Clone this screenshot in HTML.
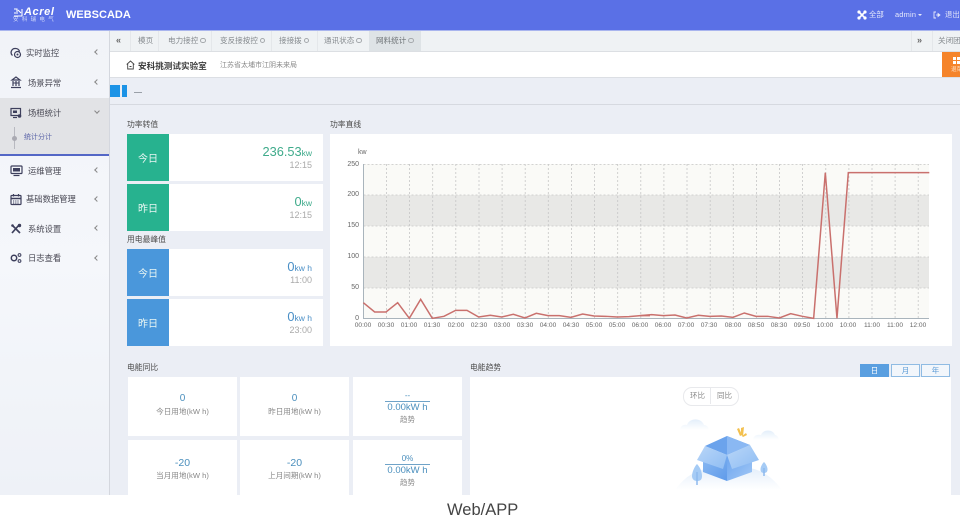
<!DOCTYPE html>
<html lang="zh">
<head>
<meta charset="utf-8">
<title>WEBSCADA</title>
<style>
html,body{margin:0;padding:0;background:#fff}
#root{position:relative;width:960px;height:522px;overflow:hidden;background:#fff;font-family:"Liberation Sans","Noto Sans CJK SC",sans-serif;color:#555;filter:blur(.35px)}
.a{position:absolute;white-space:nowrap}
.b{position:absolute}
.menu{font-size:8.3px;color:#4a4a55;line-height:12px}
.arr{position:absolute;left:95px;width:3px;height:3px;border-left:1px solid #888;border-bottom:1px solid #888;transform:rotate(45deg)}
.tab{font-size:7.6px;color:#858a8e;line-height:10px;top:36px}
.dot{display:inline-block;width:3.500px;height:3.500px;border:.6px solid #a5a9ad;border-radius:50%;margin-left:2px;vertical-align:0}
.lbl{font-size:7.8px;color:#4c4c4c;line-height:10px}
.card{position:absolute;left:127px;width:196px;background:#fff}
.side{position:absolute;left:0;top:0;bottom:0;width:42px;color:#e9f6f3;font-size:10px;display:flex;align-items:center;justify-content:center}
.val{position:absolute;right:11px;top:10px;font-size:12.800px;line-height:16px}
.val small{font-size:8.500px}
.tm{position:absolute;right:11px;top:26px;font-size:9px;line-height:11px;color:#aaa}
.cell{position:absolute;background:#fff;width:109px;text-align:center}
.num{font-size:10px;color:#4b8fbd;line-height:12px}
.sub{font-size:7.600px;color:#888;line-height:10px}
.yl{position:absolute;right:601px;font-size:7px;color:#666;line-height:8px}
.xl{position:absolute;top:322px;width:24px;margin-left:-12px;text-align:center;font-size:6.600px;line-height:8px;color:#666}
.btn{position:absolute;top:364px;width:27px;height:11px;font-size:7.500px;line-height:11px;text-align:center;border:1px solid #8fbbe3;color:#5a9ad6;background:#f2f6fb;box-sizing:content-box}
</style>
</head>
<body>
<div id="root">
  <!-- page background -->
  <div class="b" style="left:110px;top:31px;width:850px;height:464px;background:#ebeef5"></div>

  <!-- header -->
  <div class="b" style="left:0;top:0;width:960px;height:30px;background:#5a70e6"></div>
  <div class="b" style="left:0;top:30px;width:960px;height:1px;background:#a9b5ee"></div>
  <div class="a" style="left:24px;top:6px;font-size:11px;font-weight:bold;font-style:italic;color:#fff;line-height:12px;letter-spacing:.6px">Acrel</div>
  <svg class="b" style="left:13px;top:8px" width="10" height="9" viewBox="0 0 10 9"><path d="M1 1h3v3M1 8h8M9 1v7M5 2l3 3M1 5h4" fill="none" stroke="#fff" stroke-width="1.100"/></svg>
  <div class="a" style="left:13px;top:17px;font-size:5.500px;line-height:7px;color:#d8def9;letter-spacing:3.300px">安科瑞电气</div>
  <div class="a" style="left:66px;top:8px;font-size:11px;font-weight:bold;color:#fff;line-height:14px">WEBSCADA</div>
  <svg class="b" style="left:857px;top:10px" width="10" height="10" viewBox="0 0 10 10"><path d="M2 2l6 6M8 2L2 8" stroke="#fff" stroke-width="1.600"/><circle cx="2" cy="2" r="1.600" fill="#fff"/><circle cx="8" cy="2" r="1.600" fill="#fff"/><circle cx="2" cy="8" r="1.600" fill="#fff"/><circle cx="8" cy="8" r="1.600" fill="#fff"/></svg>
  <div class="a" style="left:869px;top:10px;font-size:7.400px;line-height:10px;color:#e6e9fb">全部</div>
  <div class="a" style="left:895px;top:10px;font-size:7.400px;line-height:10px;color:#e6e9fb;letter-spacing:.2px">admin</div>
  <div class="b" style="left:918px;top:14px;border-left:2px solid transparent;border-right:2px solid transparent;border-top:2px solid #e6e9fb"></div>
  <svg class="b" style="left:933px;top:11px" width="8" height="8" viewBox="0 0 8 8"><path d="M3 1H1v6h2" fill="none" stroke="#e6e9fb" stroke-width=".9"/><path d="M3 4h3M5 2.400L7 4 5 5.600z" fill="#e6e9fb" stroke="#e6e9fb" stroke-width=".8"/></svg>
  <div class="a" style="left:945px;top:10px;font-size:7.400px;line-height:10px;color:#e6e9fb">退出</div>

  <!-- sidebar -->
  <div class="b" style="left:0;top:31px;width:109px;height:464px;background:linear-gradient(180deg,#f1f3f8,#f5f7fb 50%,#eef1f7)"></div>
  <div class="b" style="left:109px;top:31px;width:1px;height:464px;background:#d4d7de"></div>
  <div class="b" style="left:0;top:98px;width:109px;height:56px;background:#e2e3e6"></div>
  <div class="b" style="left:0;top:154px;width:109px;height:2px;background:#5467c6"></div>
  <div class="b" style="left:14px;top:127px;width:1px;height:22px;background:#b8b9c0"></div>
  <div class="b" style="left:12px;top:136px;width:5px;height:5px;border-radius:50%;background:#aaaab2"></div>

  <svg class="b" style="left:10px;top:47px" width="12" height="12" viewBox="0 0 12 12"><path d="M5.500 1.500a4 4 0 0 0-3 7" fill="none" stroke="#3d3f5c" stroke-width="1.300"/><path d="M5.500 1.500a4 4 0 0 1 4 3" fill="none" stroke="#3d3f5c" stroke-width="1.300"/><circle cx="7.500" cy="7.500" r="3" fill="none" stroke="#3d3f5c" stroke-width="1.200"/><circle cx="7.500" cy="7.500" r="1" fill="#3d3f5c"/></svg>
  <div class="a menu" style="left:26px;top:47px">实时监控</div>
  <div class="arr" style="top:50px"></div>

  <svg class="b" style="left:10px;top:76px" width="12" height="13" viewBox="0 0 12 13"><path d="M6 1L2 4h8zM3 5v5M6 5v5M9 5v5M1 11.500h10" fill="none" stroke="#3d3f5c" stroke-width="1.200"/><path d="M3 7h6" stroke="#3d3f5c"/></svg>
  <div class="a menu" style="left:28px;top:77px">场景异常</div>
  <div class="arr" style="top:80px"></div>

  <svg class="b" style="left:10px;top:107px" width="12" height="12" viewBox="0 0 12 12"><rect x="1" y="1.500" width="9.500" height="7" fill="none" stroke="#3d3f5c" stroke-width="1.200"/><rect x="3" y="3.500" width="4" height="2.500" fill="#3d3f5c"/><path d="M3 10.500h4" stroke="#3d3f5c" stroke-width="1.200"/><circle cx="9.500" cy="9" r="1.800" fill="#3d3f5c"/></svg>
  <div class="a menu" style="left:28px;top:107px">场桓统计</div>
  <div class="b" style="left:95px;top:109px;width:3px;height:3px;border-left:1px solid #888;border-bottom:1px solid #888;transform:rotate(-45deg)"></div>

  <div class="a" style="left:24px;top:133px;font-size:7px;line-height:10px;color:#5b64a8">统计分计</div>

  <svg class="b" style="left:10px;top:165px" width="13" height="12" viewBox="0 0 13 12"><rect x="1" y="1" width="11" height="7.500" rx=".8" fill="none" stroke="#3d3f5c" stroke-width="1.200"/><rect x="3" y="3" width="7" height="3.500" fill="#3d3f5c"/><path d="M3.500 10.500h6" stroke="#3d3f5c" stroke-width="1.200"/></svg>
  <div class="a menu" style="left:28px;top:165px">运维管理</div>
  <div class="arr" style="top:168px"></div>

  <svg class="b" style="left:10px;top:193px" width="12" height="13" viewBox="0 0 12 13"><rect x="1" y="2.500" width="10" height="9" rx=".6" fill="none" stroke="#3d3f5c" stroke-width="1.200"/><path d="M1 5.500h10" stroke="#3d3f5c" stroke-width="1.500"/><path d="M3.500 1v2.500M8.500 1v2.500" stroke="#3d3f5c" stroke-width="1.200"/><path d="M3 8h6M3 10h6" stroke="#3d3f5c" stroke-dasharray="1.200 1"/></svg>
  <div class="a menu" style="left:26px;top:193px">基础数据管理</div>
  <div class="arr" style="top:197px"></div>

  <svg class="b" style="left:10px;top:223px" width="12" height="12" viewBox="0 0 12 12"><path d="M2 10L9 2M2 2l8 8" stroke="#3d3f5c" stroke-width="1.700"/><circle cx="9.500" cy="2.500" r="1.700" fill="#3d3f5c"/><circle cx="2.500" cy="2.500" r="1.300" fill="#3d3f5c"/></svg>
  <div class="a menu" style="left:28px;top:223px">系统设置</div>
  <div class="arr" style="top:226px"></div>

  <svg class="b" style="left:10px;top:252px" width="12" height="12" viewBox="0 0 12 12"><circle cx="4" cy="6" r="2.700" fill="none" stroke="#3d3f5c" stroke-width="1.500"/><circle cx="9.500" cy="3" r="1.400" fill="none" stroke="#3d3f5c"/><circle cx="9.500" cy="9" r="1.400" fill="none" stroke="#3d3f5c"/></svg>
  <div class="a menu" style="left:28px;top:252px">日志查看</div>
  <div class="arr" style="top:256px"></div>

  <!-- tab bar -->
  <div class="b" style="left:110px;top:31px;width:850px;height:20px;background:#eff2f4"></div>
  <div class="b" style="left:110px;top:51px;width:850px;height:1px;background:#dcdfe3"></div>
  <div class="a" style="left:116px;top:35px;font-size:9px;line-height:11px;color:#666;font-weight:bold">«</div>
  <div class="b" style="left:130px;top:31px;width:1px;height:20px;background:#e4e7ea"></div>
  <div class="a tab" style="left:138px">模页</div>
  <div class="b" style="left:158px;top:31px;width:1px;height:20px;background:#e4e7ea"></div>
  <div class="a tab" style="left:168px">电力接控<span class="dot"></span></div>
  <div class="b" style="left:211px;top:31px;width:1px;height:20px;background:#e4e7ea"></div>
  <div class="a tab" style="left:220px">变反接按控<span class="dot"></span></div>
  <div class="b" style="left:271px;top:31px;width:1px;height:20px;background:#e4e7ea"></div>
  <div class="a tab" style="left:279px">接接拨<span class="dot"></span></div>
  <div class="b" style="left:317px;top:31px;width:1px;height:20px;background:#e4e7ea"></div>
  <div class="a tab" style="left:324px">通讯状态<span class="dot"></span></div>
  <div class="b" style="left:369px;top:31px;width:52px;height:20px;background:#dee3e6"></div>
  <div class="a tab" style="left:376px;color:#6f7477">网料统计<span class="dot"></span></div>
  <div class="b" style="left:911px;top:31px;width:1px;height:20px;background:#e4e7ea"></div>
  <div class="b" style="left:932px;top:31px;width:1px;height:20px;background:#e4e7ea"></div>
  <div class="a" style="left:917px;top:35px;font-size:9px;line-height:11px;color:#666;font-weight:bold">»</div>
  <div class="a tab" style="left:938px">关闭团</div>

  <!-- title row -->
  <div class="b" style="left:110px;top:52px;width:850px;height:25px;background:#fff"></div>
  <div class="b" style="left:110px;top:77px;width:850px;height:1px;background:#dcdfe4"></div>
  <svg class="b" style="left:126px;top:60px" width="9" height="10" viewBox="0 0 9 10"><path d="M.7 4.500L4.500 1l3.800 3.500M1.700 4v5h5.600V4M3.500 6.500h2" fill="none" stroke="#444" stroke-width=".9"/></svg>
  <div class="a" style="left:138px;top:60px;font-size:8.600px;font-weight:bold;line-height:12px;color:#3d3d3d">安科挑测试实验室</div>
  <div class="a" style="left:220px;top:61px;font-size:7px;line-height:10px;color:#8a8a8a">江苏省太埔市江阴未来局</div>
  <div class="b" style="left:942px;top:52px;width:18px;height:25px;background:#f5842a"></div>
  <div class="b" style="left:953px;top:57px;width:3px;height:3px;background:#fff;box-shadow:4px 0 #fff,0 4px #fff,4px 4px #fff"></div>
  <div class="a" style="left:951px;top:67px;font-size:5.500px;line-height:7px;color:#ffe3c8">退菜</div>

  <!-- toolbar -->
  <div class="b" style="left:110px;top:85px;width:10px;height:12px;background:#1c93e6"></div>
  <div class="b" style="left:122px;top:85px;width:5px;height:12px;background:#1c93e6"></div>
  <div class="b" style="left:134px;top:92px;width:8px;height:1px;background:#9aa0a8"></div>
  <div class="b" style="left:110px;top:104px;width:850px;height:1px;background:#d6d9e0"></div>

  <!-- left cards -->
  <div class="a lbl" style="left:127px;top:120px">功率转值</div>
  <div class="card" style="top:134px;height:47px"><div class="side" style="background:#27b28f">今日</div><div class="val" style="color:#3fab8b">236.53<small>kw</small></div><div class="tm">12:15</div></div>
  <div class="card" style="top:184px;height:47px"><div class="side" style="background:#27b28f">昨日</div><div class="val" style="color:#3fab8b">0<small>kw</small></div><div class="tm">12:15</div></div>
  <div class="a lbl" style="left:127px;top:235px">用电最峰值</div>
  <div class="card" style="top:249px;height:47px"><div class="side" style="background:#4a97db">今日</div><div class="val" style="color:#4a8fc6">0<small>kw h</small></div><div class="tm">11:00</div></div>
  <div class="card" style="top:299px;height:47px"><div class="side" style="background:#4a97db">昨日</div><div class="val" style="color:#4a8fc6">0<small>kw h</small></div><div class="tm">23:00</div></div>

  <!-- chart -->
  <div class="a lbl" style="left:330px;top:120px">功率直线</div>
  <div class="b" style="left:330px;top:134px;width:622px;height:212px;background:#fff"></div>
  <div class="a" style="left:358px;top:149px;font-size:7px;line-height:8px;color:#666">kw</div>
  <svg class="b" style="left:0;top:0" width="960" height="522" viewBox="0 0 960 522">
    <rect x="363.500" y="164" width="565.500" height="154" fill="#fafaf7"/>
    <rect x="363.500" y="195" width="565.500" height="31" fill="#e8e8e6"/>
    <rect x="363.500" y="257" width="565.500" height="31" fill="#e8e8e6"/>
    <g stroke="#c6c6c6" stroke-width=".8" stroke-dasharray="2 2" fill="none">
      <path d="M363.500 164.500H929M363.500 195H929M363.500 226H929M363.500 257H929M363.500 288H929"/>
      <path d="M386.500 164V318M409.600 164V318M432.700 164V318M455.800 164V318M479 164V318M502.100 164V318M525.200 164V318M548.300 164V318M571.400 164V318M594.600 164V318M617.700 164V318M640.800 164V318M663.900 164V318M687 164V318M710.200 164V318M733.300 164V318M756.400 164V318M779.500 164V318M802.600 164V318M825.800 164V318M848.900 164V318M872 164V318M895.100 164V318M918.200 164V318"/>
    </g>
    <path d="M363.500 164V318.500H929" fill="none" stroke="#a9b4bc" stroke-width="1"/>
    <g fill="none" stroke="#c9706d" stroke-width="4.500" stroke-linejoin="miter">
      <polyline transform="translate(330,120) scale(.3333)" points="100,548 134,576 168,576 203,548 238,595 272,538 307,595 342,589 377,571 411,571 446,591 481,586 515,591 550,583 585,594 619,580 654,587 688,587 723,592 758,582 792,588 827,589 862,591 897,590 931,587 960,587"/>
      <polyline transform="translate(640,120) scale(.3333)" points="0,587 35,584 70,587 105,585 140,594 175,586 209,589 244,588 279,592 313,579 348,589 383,589 418,594 452,581 487,589 521,595 556,158 591,595 625,158 868,158"/>
    </g>
  </svg>
  <div class="yl" style="top:161px">250</div>
  <div class="yl" style="top:191px">200</div>
  <div class="yl" style="top:222px">150</div>
  <div class="yl" style="top:253px">100</div>
  <div class="yl" style="top:284px">50</div>
  <div class="yl" style="top:315px">0</div>
  <div class="xl" style="left:363px">00:00</div>
  <div class="xl" style="left:386px">00:30</div>
  <div class="xl" style="left:409px">01:00</div>
  <div class="xl" style="left:432px">01:30</div>
  <div class="xl" style="left:456px">02:00</div>
  <div class="xl" style="left:479px">02:30</div>
  <div class="xl" style="left:502px">03:00</div>
  <div class="xl" style="left:525px">03:30</div>
  <div class="xl" style="left:548px">04:00</div>
  <div class="xl" style="left:571px">04:30</div>
  <div class="xl" style="left:594px">05:00</div>
  <div class="xl" style="left:617px">05:00</div>
  <div class="xl" style="left:640px">06:00</div>
  <div class="xl" style="left:663px">06:00</div>
  <div class="xl" style="left:686px">07:00</div>
  <div class="xl" style="left:709px">07:30</div>
  <div class="xl" style="left:733px">08:00</div>
  <div class="xl" style="left:756px">08:50</div>
  <div class="xl" style="left:779px">08:30</div>
  <div class="xl" style="left:802px">09:50</div>
  <div class="xl" style="left:825px">10:00</div>
  <div class="xl" style="left:848px">10:00</div>
  <div class="xl" style="left:872px">11:00</div>
  <div class="xl" style="left:895px">11:00</div>
  <div class="xl" style="left:918px">12:00</div>

  <!-- bottom left -->
  <div class="a lbl" style="left:127px;top:363px">电能同比</div>
  <div class="cell" style="left:128px;top:377px;height:59px"><div class="num" style="margin-top:16px">0</div><div class="sub" style="margin-top:2px">今日用地(kW h)</div></div>
  <div class="cell" style="left:240px;top:377px;height:59px"><div class="num" style="margin-top:16px">0</div><div class="sub" style="margin-top:2px">昨日用地(kW h)</div></div>
  <div class="cell" style="left:353px;top:377px;height:59px">
    <div class="num" style="margin-top:14px;font-size:8px;line-height:9px">--</div>
    <div style="width:45px;height:1px;background:#6fa3c8;margin:1px auto 0"></div>
    <div class="num" style="font-size:9.500px;line-height:11px;margin-top:0">0.00kW h</div>
    <div class="sub" style="margin-top:2px">趋势</div>
  </div>
  <div class="cell" style="left:128px;top:440px;height:55px"><div class="num" style="margin-top:17px;font-size:10.500px">-20</div><div class="sub" style="margin-top:2px">当月用地(kW h)</div></div>
  <div class="cell" style="left:240px;top:440px;height:55px"><div class="num" style="margin-top:17px;font-size:10.500px">-20</div><div class="sub" style="margin-top:2px">上月间期(kW h)</div></div>
  <div class="cell" style="left:353px;top:440px;height:55px">
    <div class="num" style="margin-top:14px;font-size:8px;line-height:9px">0%</div>
    <div style="width:45px;height:1px;background:#6fa3c8;margin:1px auto 0"></div>
    <div class="num" style="font-size:9.500px;line-height:11px;margin-top:0">0.00kW h</div>
    <div class="sub" style="margin-top:2px">趋势</div>
  </div>

  <!-- bottom right -->
  <div class="a lbl" style="left:470px;top:363px">电能趋势</div>
  <div class="btn" style="left:860px;background:#5a9fe0;border-color:#5a9fe0;color:#fff">日</div>
  <div class="btn" style="left:891px">月</div>
  <div class="btn" style="left:921px">年</div>
  <div class="b" style="left:470px;top:377px;width:481px;height:118px;background:#fff"></div>
  <div class="b" style="left:683px;top:387px;width:54px;height:17px;border:.7px solid #e8e9ec;border-radius:9px;background:#fff"></div>
  <div class="b" style="left:710px;top:387px;width:1px;height:17px;background:#e8e9ec"></div>
  <div class="a" style="left:690px;top:391px;font-size:7.500px;line-height:10px;color:#888">环比</div>
  <div class="a" style="left:717px;top:391px;font-size:7.500px;line-height:10px;color:#888">同比</div>

  <svg class="b" style="left:670px;top:410px" width="120" height="85" viewBox="0 0 120 85">
    <defs>
      <linearGradient id="g1" x1="0" y1="0" x2="0" y2="1"><stop offset="0" stop-color="#e3eefa"/><stop offset="1" stop-color="#e6f0fb" stop-opacity="0"/></linearGradient>
      <linearGradient id="g2" x1="0" y1="0" x2="1" y2="1"><stop offset="0" stop-color="#b9d6f8"/><stop offset="1" stop-color="#8fbdf3"/></linearGradient>
      <linearGradient id="g3" x1="0" y1="0" x2="1" y2="1"><stop offset="0" stop-color="#8ab9f2"/><stop offset="1" stop-color="#5f9bea"/></linearGradient>
      <linearGradient id="g4" x1="0" y1="0" x2="1" y2="1"><stop offset="0" stop-color="#6ba4ee"/><stop offset="1" stop-color="#a2c8f6"/></linearGradient>
    </defs>
    <path d="M5 80Q25 52 57 60Q90 50 112 80z" fill="url(#g1)"/>
    <path d="M10 20c0-4 4-6 7-5 2-7 14-8 17 0 3 0 5 3 5 5z" fill="url(#g1)"/>
    <path d="M83 30c0-4 4-6 8-5 2-6 12-6 14 0 2 0 4 3 4 5z" fill="url(#g1)"/>
    <path d="M57 26L35 36l22 9 23-10z" fill="#6ba3ec"/>
    <path d="M57 26v19l23-10z" fill="#8ab8f3"/>
    <path d="M33 52v10l24 9V45z" fill="url(#g3)"/>
    <path d="M57 45v26l25-9V52z" fill="url(#g4)"/>
    <path d="M27 50l8-14 22 9-4 14z" fill="url(#g2)"/>
    <path d="M57 45l23-10 9 15-27 9z" fill="url(#g2)"/>
    <g fill="#f3c04f"><path d="M67 19l2-1 3 7-2 1z"/><path d="M71 18l3-1-1 9-2-1z"/><path d="M76 23l1 2-4 2-1-1z"/></g>
    <path d="M27 54c3 3 5 8 5 12s-2 5-5 5-5-2-5-5 2-9 5-12z" fill="#a5cbf5"/>
    <path d="M27 62v13" stroke="#8db9ee" stroke-width="1.500"/>
    <path d="M94 52c2 2 3.500 5 3.500 7.500s-1.500 3.500-3.500 3.500-3.500-1-3.500-3.500 1.500-5.500 3.500-7.500z" fill="#a5cbf5"/>
    <path d="M94 58v8" stroke="#8db9ee" stroke-width="1.500"/>
  </svg>

  <!-- bottom caption -->
  <div class="b" style="left:0;top:495px;width:960px;height:27px;background:#fff"></div>
  <div class="a" style="left:447px;top:500px;font-size:16.500px;line-height:20px;color:#444">Web/APP</div>
</div>
</body>
</html>
